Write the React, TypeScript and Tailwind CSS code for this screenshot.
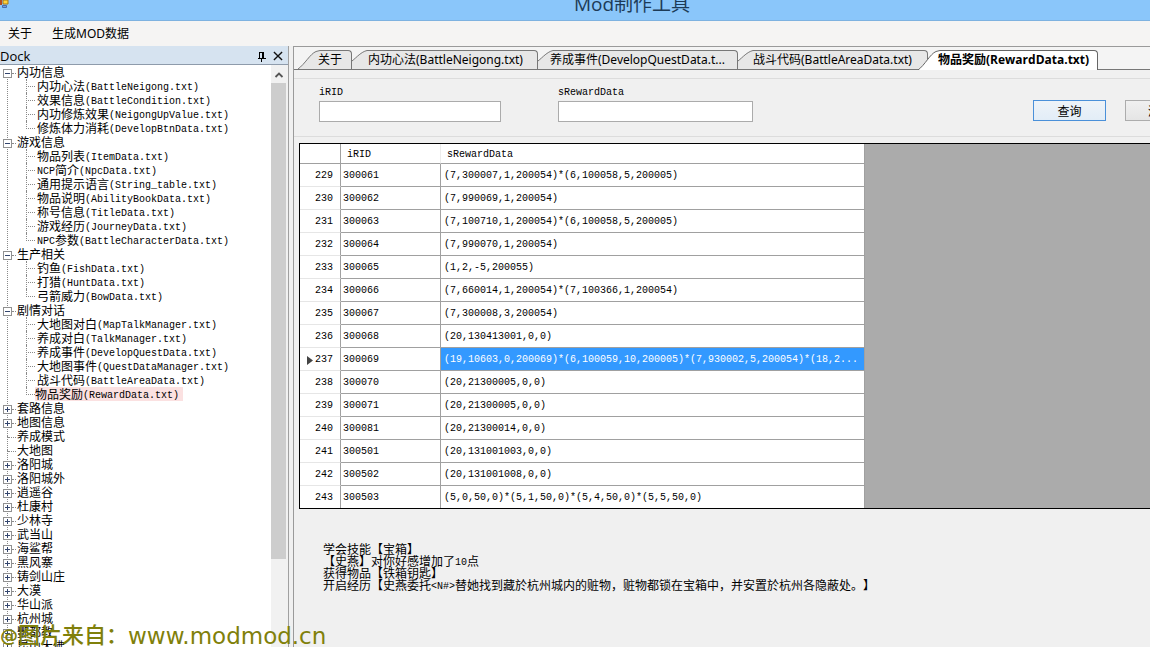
import { ReactNode } from "react";

type TreeNode = { label: string; open?: boolean; leaf?: boolean; children?: string[] };

const tree: TreeNode[] = [
  { label: "内功信息", open: true, children: ["内功心法(BattleNeigong.txt)", "效果信息(BattleCondition.txt)", "内功修炼效果(NeigongUpValue.txt)", "修炼体力消耗(DevelopBtnData.txt)"] },
  { label: "游戏信息", open: true, children: ["物品列表(ItemData.txt)", "NCP简介(NpcData.txt)", "通用提示语言(String_table.txt)", "物品说明(AbilityBookData.txt)", "称号信息(TitleData.txt)", "游戏经历(JourneyData.txt)", "NPC参数(BattleCharacterData.txt)"] },
  { label: "生产相关", open: true, children: ["钓鱼(FishData.txt)", "打猎(HuntData.txt)", "弓箭威力(BowData.txt)"] },
  { label: "剧情对话", open: true, children: ["大地图对白(MapTalkManager.txt)", "养成对白(TalkManager.txt)", "养成事件(DevelopQuestData.txt)", "大地图事件(QuestDataManager.txt)", "战斗代码(BattleAreaData.txt)", "物品奖励(RewardData.txt)"] },
  { label: "套路信息" },
  { label: "地图信息" },
  { label: "养成模式", leaf: true },
  { label: "大地图", leaf: true },
  { label: "洛阳城" },
  { label: "洛阳城外" },
  { label: "逍遥谷" },
  { label: "杜康村" },
  { label: "少林寺" },
  { label: "武当山" },
  { label: "海鲨帮" },
  { label: "黑风寨" },
  { label: "铸剑山庄" },
  { label: "大漠" },
  { label: "华山派" },
  { label: "杭州城" },
  { label: "酆都教" },
  { label: "昆山大佛" },
];

const selectedFile = "物品奖励(RewardData.txt)";

const rows: [number, string, string][] = [
  [229, "300061", "(7,300007,1,200054)*(6,100058,5,200005)"],
  [230, "300062", "(7,990069,1,200054)"],
  [231, "300063", "(7,100710,1,200054)*(6,100058,5,200005)"],
  [232, "300064", "(7,990070,1,200054)"],
  [233, "300065", "(1,2,-5,200055)"],
  [234, "300066", "(7,660014,1,200054)*(7,100366,1,200054)"],
  [235, "300067", "(7,300008,3,200054)"],
  [236, "300068", "(20,130413001,0,0)"],
  [237, "300069", "(19,10603,0,200069)*(6,100059,10,200005)*(7,930002,5,200054)*(18,2..."],
  [238, "300070", "(20,21300005,0,0)"],
  [239, "300071", "(20,21300005,0,0)"],
  [240, "300081", "(20,21300014,0,0)"],
  [241, "300501", "(20,131001003,0,0)"],
  [242, "300502", "(20,131001008,0,0)"],
  [243, "300503", "(5,0,50,0)*(5,1,50,0)*(5,4,50,0)*(5,5,50,0)"],
];

const notes = [
  "学会技能【宝箱】",
  "【史燕】对你好感增加了10点",
  "获得物品【铁箱钥匙】",
  "开启经历【史燕委托<N#>替她找到藏於杭州城内的赃物，赃物都锁在宝箱中，并安置於杭州各隐蔽处。】",
];

const tabs = [
  { label: "关于", box: "w-[54px] pl-[20px]" },
  { label: "内功心法(BattleNeigong.txt)", box: "w-[186px] pl-[16px]" },
  { label: "养成事件(DevelopQuestData.t...", box: "w-[200px] pl-[12px]" },
  { label: "战斗代码(BattleAreaData.txt)", box: "w-[190px] pl-[15px]" },
];

/* Latin runs use the half-width mono face, the rest the CJK face. */
function Mixed({ text }: { text: string }) {
  return (
    <>
      {text.split(/([\x20-\x7e]+)/).map((part, i) =>
        i % 2 ? (
          <span key={i} className="align-[1px] font-['Liberation_Mono','Noto_Sans_CJK_SC',monospace] text-[10px] leading-none">{part}</span>
        ) : (
          part
        )
      )}
    </>
  );
}

function Expander({ open }: { open?: boolean }) {
  return (
    <button aria-label={open ? "折叠" : "展开"} className="relative block size-[9px] shrink-0">
      <svg viewBox="0 0 9 9" className="block size-[9px]" shapeRendering="crispEdges">
        <rect x="0.5" y="0.5" width="8" height="8" fill="#fff" stroke="#919191" />
        <path d="M2 4.5h5" stroke="#34466e" />
        {!open && <path d="M4.5 2v5" stroke="#34466e" />}
      </svg>
    </button>
  );
}

function Line({ children }: { children: ReactNode }) {
  return <div className="flex h-[14px] items-center whitespace-nowrap">{children}</div>;
}

function TreeItem({ node, last }: { node: TreeNode; last: boolean }) {
  return (
    <li className="relative">
      {!last && <span className="absolute top-[7px] bottom-[-7px] left-[7px] border-l border-dotted border-[#8a8a8a]" />}
      <Line>
        <span className="flex h-[14px] w-[17px] items-center pt-[3px] pl-[3px]">
          {node.leaf ? <span className="ml-[5px] w-[8px] border-t border-dotted border-[#8a8a8a]" /> : <Expander open={node.open} />}
          {!node.leaf && <span className="w-[4px] border-t border-dotted border-[#8a8a8a]" />}
        </span>
        <span>{node.label}</span>
      </Line>
      {node.children && (
        <ul>
          {node.children.map((c, i) => (
            <li key={c} className="relative pl-[26px]">
              <span className={`absolute top-0 left-[26px] border-l border-dotted border-[#8a8a8a] ${i === node.children!.length - 1 ? "h-[8px]" : "h-[14px]"}`} />
              <Line>
                <span className="w-[9px] border-t border-dotted border-[#8a8a8a]" />
                <span className={c === selectedFile ? "h-[14px] bg-[#fbe1e1] pr-[4px]" : "h-[14px] pl-[2px]"}>
                  <Mixed text={c} />
                </span>
              </Line>
            </li>
          ))}
        </ul>
      )}
    </li>
  );
}

function Tab({ label, box, first }: { label: string; box: string; first?: boolean }) {
  return (
    <button role="tab" aria-selected="false" className={`relative h-[19px] shrink-0 text-left whitespace-nowrap ${box}`}>
      <svg className="absolute top-0 left-0 h-[19px] w-[24px]" viewBox="0 0 24 19">
        <path d={first ? "M0 19C7 14 12 4 18 1.5L22 .5H24V19Z" : "M0 19V11C5 7 9 2 15 .5H24V19Z"} fill="#e7e7e7" />
        <path d={first ? "M0 19C7 14 12 4 18 1.5L22 .5H24" : "M0 11C5 7 9 2 15 .5H24"} fill="none" stroke="#777" />
      </svg>
      <span className="absolute inset-y-0 right-0 left-[24px] rounded-tr-[4px] border-t border-r border-[#777] bg-[#e7e7e7]" />
      <span className="relative">{label}</span>
    </button>
  );
}

export default function App() {
  return (
    <div className="relative flex h-screen flex-col overflow-hidden bg-[#f0f0f0] font-['Noto_Sans_CJK_SC',sans-serif] text-[12px] leading-[14px] text-black">
      <header className="relative flex h-[21px] shrink-0 items-end justify-center border-b border-[#7eb2e0] bg-[#8ac6fa]">
        <svg className="absolute top-0 left-0 h-[9px] w-[9px]" viewBox="0 0 9 9">
          <path d="M0 0h2v5H0z" fill="#b34a20" />
          <path d="M3 0h5v4H3z" fill="#ffd23c" stroke="#a87814" />
          <path d="M2.500 5.500h4v2h-4z" fill="#6f9be8" stroke="#486dab" />
        </svg>
        <h1 className="flex h-[20px] items-center pl-[114px] font-['Open_Sans','Noto_Sans_CJK_SC',sans-serif] text-[19px] leading-[20px] text-[#1d3b57]">
          <span className="-mt-[12px]">Mod制作工具</span>
        </h1>
      </header>

      <nav className="flex h-[25px] shrink-0 items-center gap-[20px] bg-[#f5f4f3] pl-[8px] font-['Noto_Sans','Noto_Sans_CJK_SC',sans-serif]">
        <button>关于</button>
        <button>生成MOD数据</button>
      </nav>

      <div className="flex min-h-0 flex-1">
        <aside className="flex w-[289px] shrink-0 flex-col border-r border-[#a0a0a0] bg-white">
          <div className="flex h-[19px] shrink-0 items-center border-b border-[#8e9bab] bg-[#d6e3f0] pt-[2px] font-['Open_Sans',sans-serif] text-[13px]">
            <span className="flex-1">Dock</span>
            <button aria-label="固定" className="mr-[7px]">
              <svg className="block h-[11px] w-[9px]" viewBox="0 0 9 11" shapeRendering="crispEdges">
                <path d="M2.500 7V1.500h4V7M0.500 7.500h8M5.500 1v6M4.500 8v3" fill="none" stroke="#000" />
              </svg>
            </button>
            <button aria-label="关闭" className="mr-[5px]">
              <svg className="block size-[10px]" viewBox="0 0 11 11">
                <path d="M1 1l9 9M10 1l-9 9" stroke="#111" strokeWidth="1.500" />
              </svg>
            </button>
          </div>
          <div className="flex min-h-0 flex-1">
            <ul className="min-w-0 flex-1 overflow-hidden">
              {tree.map((n, i) => (
                <TreeItem key={n.label} node={n} last={i === tree.length - 1} />
              ))}
            </ul>
            <div className="flex w-[17px] shrink-0 flex-col bg-[#f1f1f1]">
              <svg className="block h-[18px] w-[17px]" viewBox="0 0 17 18">
                <path d="M4.500 12l3.500-3.500 3.500 3.500" fill="none" stroke="#555" strokeWidth="1.800" />
              </svg>
              <div className="mr-[2px] h-[476px] bg-[#cdcdcd]" />
            </div>
          </div>
        </aside>

        <main className="ml-[4px] flex min-w-0 flex-1 flex-col border-t border-l border-[#9a9a9a] bg-[#f0f0f0]">
          <div role="tablist" className="flex h-[23px] shrink-0 items-end border-b border-[#777] bg-[#f4f4f4] pl-[4px] font-['Noto_Sans','Noto_Sans_CJK_SC',sans-serif] leading-[18px]">
            {tabs.map((t, i) => (
              <Tab key={t.label} label={t.label} box={t.box} first={i === 0} />
            ))}
            <button role="tab" aria-selected="true" className="relative -mb-px -ml-[10px] h-[20px] w-[180px] shrink-0 pl-[20px] text-left font-['Open_Sans','Noto_Sans_CJK_SC',sans-serif] font-bold whitespace-nowrap">
              <svg className="absolute top-0 left-0 h-[20px] w-[24px]" viewBox="0 0 24 20">
                <path d="M0 20C7 15 12 4 18 1.500L22 .5H24V20Z" fill="#fff" />
                <path d="M0 20C7 15 12 4 18 1.500L22 .5H24" fill="none" stroke="#666" />
              </svg>
              <span className="absolute inset-y-0 right-0 left-[24px] rounded-tr-[4px] border-t border-r border-[#666] bg-white" />
              <span className="relative">物品奖励(RewardData.txt)</span>
            </button>
          </div>

          <form className="mt-[8px] flex h-[59px] shrink-0 items-start overflow-hidden border-y border-[#dcdcdc] pt-[7px] pl-[25px]" onSubmit={(e) => e.preventDefault()}>
            <label className="flex w-[182px] shrink-0 flex-col gap-[1px] font-['Liberation_Mono',monospace] text-[10px]">
              iRID
              <input type="text" className="h-[21px] border border-[#ababab] bg-white px-1" />
            </label>
            <label className="ml-[57px] flex w-[195px] shrink-0 flex-col gap-[1px] font-['Liberation_Mono',monospace] text-[10px]">
              sRewardData
              <input type="text" className="h-[21px] border border-[#ababab] bg-white px-1" />
            </label>
            <button className="mt-[14px] ml-[280px] h-[21px] w-[73px] shrink-0 border border-[#4a90d9] bg-linear-to-b from-[#eef3f8] to-[#e2edf7]">查询</button>
            <button className="mt-[14px] ml-[19px] h-[21px] w-[73px] shrink-0 border border-[#acacac] bg-linear-to-b from-[#f0f0f0] to-[#e5e5e5] pr-[3px]">清空</button>
          </form>

          <div className="mt-[6px] ml-[5px] h-[366px] shrink-0 overflow-hidden border-y border-l border-black bg-[#ababab]">
            <table className="w-[565px] table-fixed border-separate border-spacing-0 bg-white font-['Liberation_Mono',monospace] text-[10px]">
              <colgroup>
                <col className="w-[41px]" />
                <col className="w-[100px]" />
                <col />
              </colgroup>
              <thead>
                <tr className="h-[20px] text-left">
                  <th className="border-r border-b border-[#a0a0a0] p-0" />
                  <th className="border-r border-b border-[#a0a0a0] border-r-[#ececec] p-0 pt-[2px] pl-[6px] font-normal">iRID</th>
                  <th className="border-r border-b border-[#a0a0a0] p-0 pt-[2px] pl-[6px] font-normal">sRewardData</th>
                </tr>
              </thead>
              <tbody>
                {rows.map(([n, id, data]) => (
                  <tr key={n} className="h-[23px]">
                    <th className="border-r border-b border-[#e6e6e6] border-r-[#a0a0a0] p-0 pt-[2px] font-normal">
                      <span className="flex items-center justify-end gap-[2px] pr-[7px]">
                        {n === 237 && (
                          <svg className="h-[9px] w-[6px]" viewBox="0 0 6 9">
                            <path d="M0 0l6 4.500L0 9z" fill="#444" />
                          </svg>
                        )}
                        {n}
                      </span>
                    </th>
                    <td className="border-r border-b border-[#a0a0a0] p-0 pt-[2px] pl-[2px]">{id}</td>
                    <td className={`border-r border-b border-[#a0a0a0] p-0 pt-[2px] pl-[3px] whitespace-nowrap ${n === 237 ? "bg-[#3399ff] text-white" : ""}`}>{data}</td>
                  </tr>
                ))}
              </tbody>
            </table>
          </div>

          <div className="mt-[34px] ml-[29px] leading-[12px] whitespace-nowrap [text-spacing-trim:space-all]">
            {notes.map((note) => (
              <p key={note} className="h-[12px]">
                <Mixed text={note} />
              </p>
            ))}
          </div>
        </main>
      </div>

      <p className="absolute bottom-0 left-0 flex items-center font-['DejaVu_Sans','Noto_Sans_CJK_SC',sans-serif] text-[22px] leading-[22px] whitespace-nowrap text-[#80800a]">
        <span className="text-[18px] font-bold">@</span>
        <span className="font-medium">图片来自：</span>
        <span className="text-[23px]">www.modmod.cn</span>
      </p>
    </div>
  );
}
